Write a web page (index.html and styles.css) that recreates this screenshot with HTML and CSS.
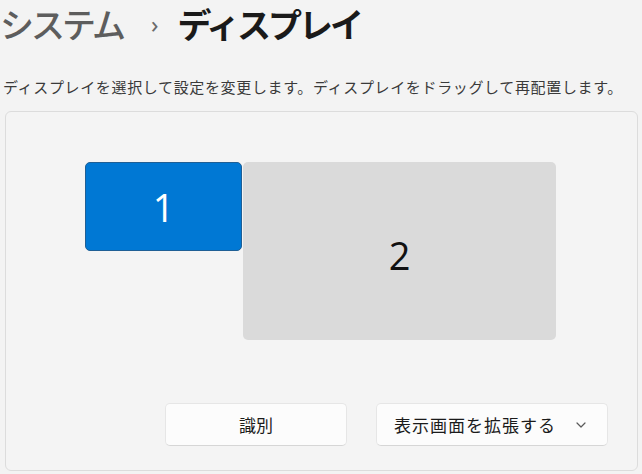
FILE: index.html
```html
<!DOCTYPE html>
<html lang="ja">
<head>
    <meta charset="UTF-8">
    <meta name="viewport" content="width=device-width, initial-scale=1.0">
    <title>ディスプレイ</title>
    <link rel="stylesheet" href="styles.css">
</head>
<body>
    <h1 class="breadcrumb">
        <span class="parent">システム</span>
        <span class="sep">›</span>
        <span class="current">ディスプレイ</span>
    </h1>
    <p class="hint">ディスプレイを選択して設定を変更します。ディスプレイをドラッグして再配置します。</p>

    <div class="card">
        <div class="arrange">
            <div class="monitor monitor-1 selected">1</div>
            <div class="monitor monitor-2">2</div>
        </div>
        <div class="actions">
            <button class="btn identify">識別</button>
            <button class="btn dropdown">
                <span>表示画面を拡張する</span>
                <svg class="chevron" width="10" height="6" viewBox="0 0 10 6">
                    <path d="M1 1 L5 5 L9 1" fill="none" stroke="#5a5a5a" stroke-width="1.2" stroke-linecap="round" stroke-linejoin="round"/>
                </svg>
            </button>
        </div>
    </div>
</body>
</html>
```

FILE: styles.css
```css
body {
    margin: 0;
    background-color: #f3f3f3;
    font-family: "Noto Sans CJK JP", "Noto Sans", sans-serif;
    color: #1b1b1b;
}

.breadcrumb {
    margin: 0;
    padding: 2px 0 0 0;
    height: 44px;
    display: flex;
    align-items: center;
    font-size: 34px;
    font-weight: 400;
    letter-spacing: -3px;
    line-height: 1;
}
.parent {
    color: #5d5d5d;
    font-weight: 500;
}
.sep {
    font-family: "Noto Sans", sans-serif;
    font-size: 24px;
    color: #6a6a6a;
    margin: 0 22px 0 28px;
}
.current {
    font-weight: 700;
    color: #1a1a1a;
}

.hint {
    margin: 31px 0 0 3px;
    font-size: 15px;
    letter-spacing: 0.65px;
    line-height: 20px;
    color: #3a3a3a;
}

.card {
    margin: 14px 4px 0 5px;
    height: 360px;
    box-sizing: border-box;
    border: 1px solid #dcdcdc;
    border-radius: 6px;
    background-color: #f4f4f4;
    display: flex;
    flex-direction: column;
    padding: 0 29px 24px 0;
}

.arrange {
    position: relative;
    flex: 1;
}

.monitor {
    position: absolute;
    box-sizing: border-box;
    display: flex;
    align-items: center;
    justify-content: center;
    font-family: "Open Sans", "Noto Sans", sans-serif;
    font-size: 38px;
    border-radius: 5px;
}
.monitor-1 {
    left: 79px;
    top: 50px;
    width: 157px;
    height: 89px;
    background-color: #0078d4;
    border: 1px solid #1f5f95;
    color: #ffffff;
    z-index: 1;
}
.monitor-2 {
    left: 237px;
    top: 50px;
    width: 313px;
    height: 178px;
    background-color: #dadada;
    color: #111111;
    padding-top: 8px;
}

.actions {
    display: flex;
    justify-content: flex-end;
    gap: 29px;
}

.btn {
    height: 43px;
    box-sizing: border-box;
    background-color: #fcfcfc;
    border: 1px solid #e6e6e6;
    border-bottom-color: #d6d6d6;
    border-radius: 5px;
    font-family: "Noto Sans CJK JP", sans-serif;
    font-size: 17px;
    color: #1b1b1b;
}
.identify {
    width: 182px;
}
.dropdown {
    width: 232px;
    display: flex;
    align-items: center;
    padding: 0 20px 0 17px;
    gap: 20px;
}
.dropdown span {
    letter-spacing: 1px;
}
.chevron {
    margin-top: 1px;
}
```
